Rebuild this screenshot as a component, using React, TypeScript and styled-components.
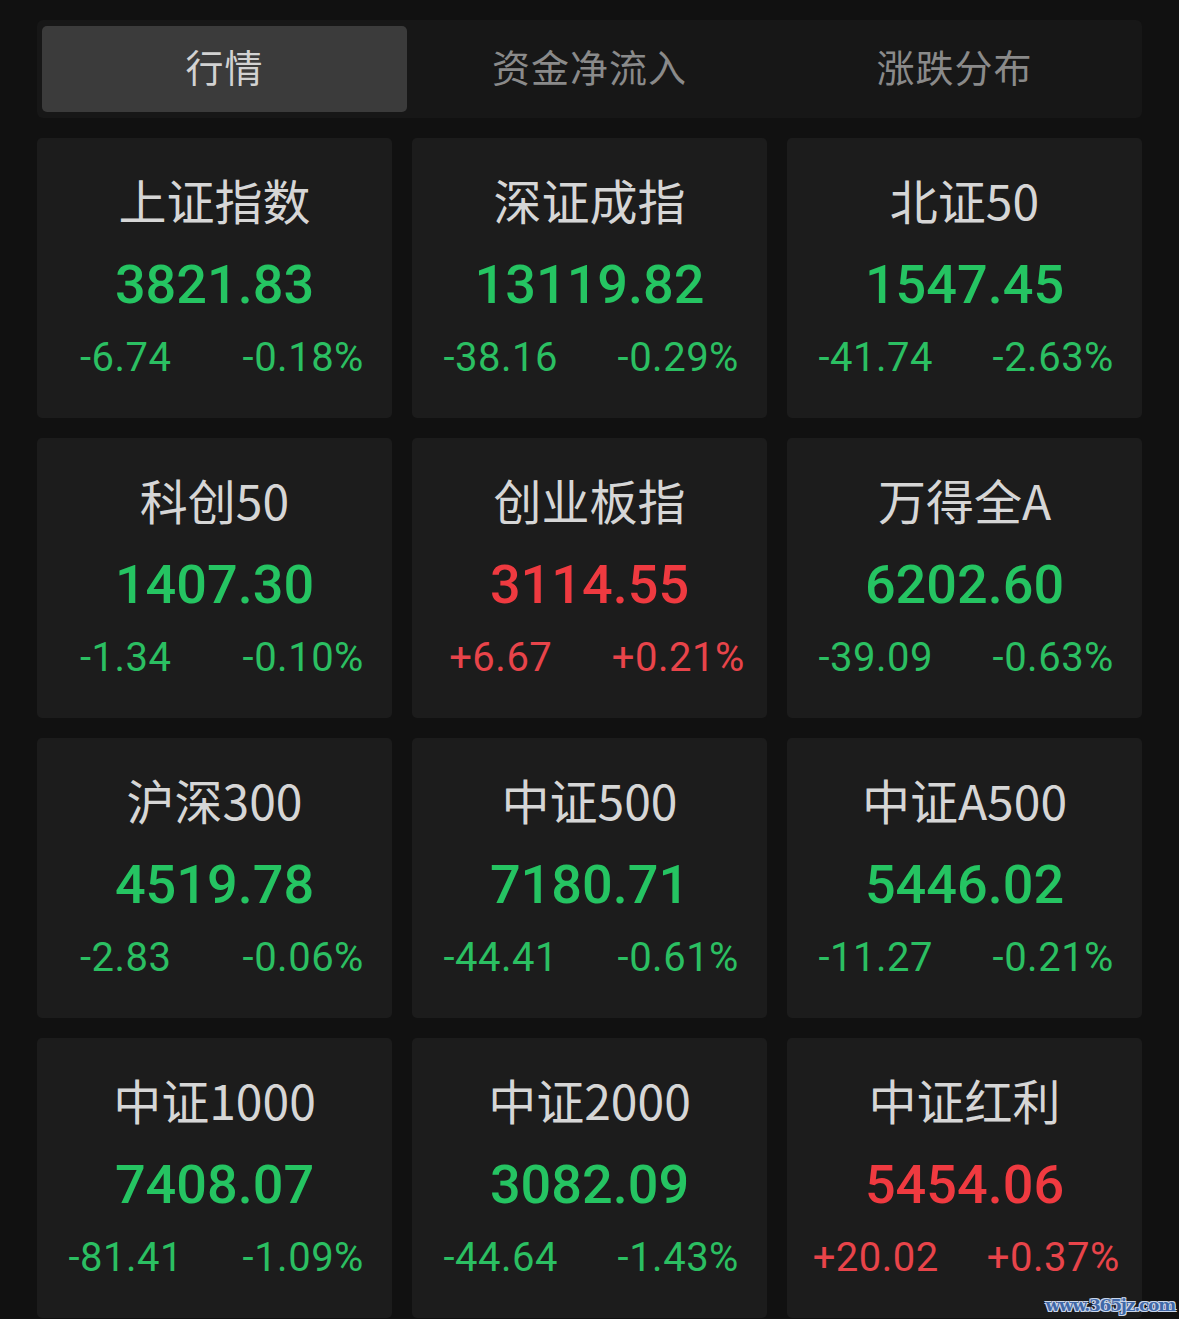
import React from 'react'
import styled, { createGlobalStyle } from 'styled-components'

const GlobalStyle = createGlobalStyle`
    html, body {
        margin: 0;
        padding: 0;
        background: #111111;
    }
    body {
        font-family: Roboto, "Noto Sans CJK SC", sans-serif;
    }
`

const Page = styled.div`
    position: relative;
    width: 1179px;
    height: 1319px;
    overflow: hidden;
    background: #111111;
    padding: 20px 37px 0 37px;
    box-sizing: border-box;
`

const TabBar = styled.nav`
    display: grid;
    grid-template-columns: repeat(3, 1fr);
    padding: 6px 5px;
    background: #171717;
    border-radius: 6px;
    height: 98px;
    box-sizing: border-box;
`

const Tab = styled.div<{ $active?: boolean }>`
    display: flex;
    align-items: center;
    justify-content: center;
    padding-bottom: 8px;
    border-radius: 5px;
    background: ${({ $active }) => ($active ? '#3b3b3b' : 'transparent')};
    color: ${({ $active }) => ($active ? '#d2d2d2' : '#8a8a8a')};
    font-family: "Noto Sans CJK SC", sans-serif;
    font-size: 38px;
    letter-spacing: 1px;
`

const Grid = styled.section`
    display: grid;
    grid-template-columns: repeat(3, 355px);
    grid-auto-rows: 280px;
    column-gap: 20px;
    row-gap: 20px;
    margin-top: 20px;
`

const Card = styled.div`
    display: flex;
    flex-direction: column;
    align-items: center;
    background: #1c1c1c;
    border-radius: 5px;
    padding-top: 33px;
    box-sizing: border-box;
`

const Title = styled.div`
    font-family: "Noto Sans CJK SC", sans-serif;
    font-size: 48px;
    line-height: 56px;
    color: #d6d6d6;
`

const Price = styled.div<{ $up: boolean }>`
    margin-top: 26px;
    font-family: Roboto, sans-serif;
    font-weight: 500;
    font-size: 54px;
    line-height: 64px;
    color: ${({ $up }) => ($up ? '#ef3a40' : '#25c462')};
`

const Changes = styled.div<{ $up: boolean }>`
    margin-top: 17px;
    width: 100%;
    display: grid;
    grid-template-columns: 1fr 1fr;
    font-family: Roboto, sans-serif;
    font-size: 40px;
    line-height: 48px;
    letter-spacing: 0.5px;
    color: ${({ $up }) => ($up ? '#e8444a' : '#2bbf62')};

    span {
        text-align: center;
    }
`

const Watermark = styled.div`
    position: absolute;
    right: 4px;
    bottom: 4px;
    font-family: "DejaVu Serif", serif;
    font-weight: bold;
    font-size: 17px;
    line-height: 20px;
    letter-spacing: -1.2px;
    color: #3f68a8;
    text-shadow: -1px -1px 0 #c9d6ea, 1px -1px 0 #c9d6ea, -1px 1px 0 #c9d6ea,
        1px 1px 0 #c9d6ea;
`

type Index = {
    name: string
    price: string
    change: string
    percent: string
}

const indices: Index[] = [
    { name: '上证指数', price: '3821.83', change: '-6.74', percent: '-0.18%' },
    { name: '深证成指', price: '13119.82', change: '-38.16', percent: '-0.29%' },
    { name: '北证50', price: '1547.45', change: '-41.74', percent: '-2.63%' },
    { name: '科创50', price: '1407.30', change: '-1.34', percent: '-0.10%' },
    { name: '创业板指', price: '3114.55', change: '+6.67', percent: '+0.21%' },
    { name: '万得全A', price: '6202.60', change: '-39.09', percent: '-0.63%' },
    { name: '沪深300', price: '4519.78', change: '-2.83', percent: '-0.06%' },
    { name: '中证500', price: '7180.71', change: '-44.41', percent: '-0.61%' },
    { name: '中证A500', price: '5446.02', change: '-11.27', percent: '-0.21%' },
    { name: '中证1000', price: '7408.07', change: '-81.41', percent: '-1.09%' },
    { name: '中证2000', price: '3082.09', change: '-44.64', percent: '-1.43%' },
    { name: '中证红利', price: '5454.06', change: '+20.02', percent: '+0.37%' },
]

const tabs = ['行情', '资金净流入', '涨跌分布']

const App = (): JSX.Element => {
    return (
        <>
            <GlobalStyle />
            <Page>
                <TabBar>
                    {tabs.map((tab, i) => (
                        <Tab key={tab} $active={i === 0}>
                            {tab}
                        </Tab>
                    ))}
                </TabBar>
                <Grid>
                    {indices.map((item) => {
                        const up = item.change.startsWith('+')
                        return (
                            <Card key={item.name}>
                                <Title>{item.name}</Title>
                                <Price $up={up}>{item.price}</Price>
                                <Changes $up={up}>
                                    <span>{item.change}</span>
                                    <span>{item.percent}</span>
                                </Changes>
                            </Card>
                        )
                    })}
                </Grid>
                <Watermark>www.365jz.com</Watermark>
            </Page>
        </>
    )
}

export default App
